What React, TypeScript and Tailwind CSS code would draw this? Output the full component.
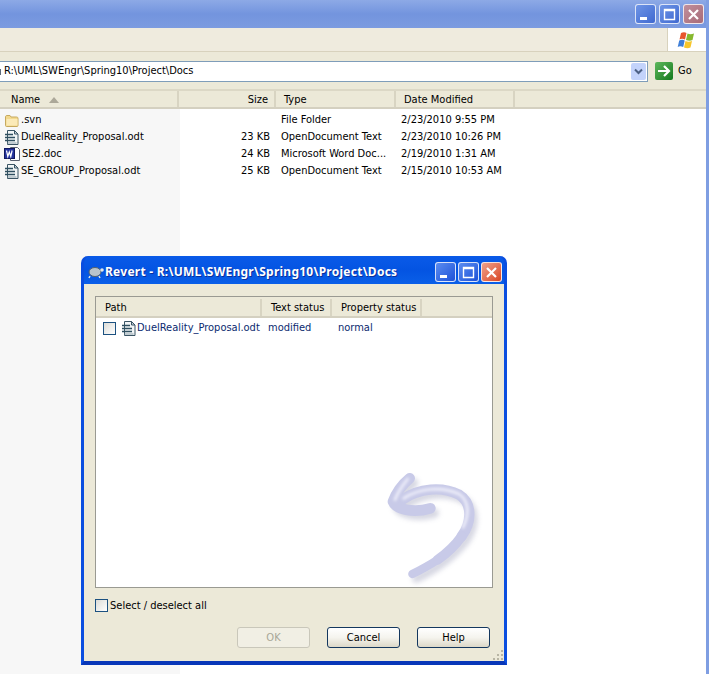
import React from 'react';

const files = [
  { name: '.svn', size: '', type: 'File Folder', date: '2/23/2010 9:55 PM', icon: 'folder' },
  { name: 'DuelReality_Proposal.odt', size: '23 KB', type: 'OpenDocument Text', date: '2/23/2010 10:26 PM', icon: 'odt' },
  { name: 'SE2.doc', size: '24 KB', type: 'Microsoft Word Doc...', date: '2/19/2010 1:31 AM', icon: 'word' },
  { name: 'SE_GROUP_Proposal.odt', size: '25 KB', type: 'OpenDocument Text', date: '2/15/2010 10:53 AM', icon: 'odt' },
];

const OdtIcon = () => (
  <svg width="16" height="17" viewBox="0 0 16 17" className="shrink-0">
    <path d="M3.500 1.500h7l3.500 3.500v10.500h-10.500z" fill="#f2f5f6" stroke="#3a5464" />
    <path d="M10.500 1.500v3.500h3.500z" fill="#c5d3da" stroke="#3a5464" />
    <path d="M1 5.500h8M1 8.500h10M1 11.500h10" stroke="#2f4f60" strokeWidth="1.300" />
    <path d="M3.500 14h9" stroke="#8fa2ac" />
  </svg>
);

const WordIcon = () => (
  <svg width="17" height="17" viewBox="0 0 17 17" className="shrink-0">
    <path d="M6.500 1.500h7l2 2v11h-9z" fill="#fff" stroke="#59606f" />
    <rect x="0.500" y="2.500" width="10" height="10" fill="#23329c" stroke="#10185f" />
    <path d="M2.500 4.500l1.300 6 1.500-4.500 1.500 4.500 1.300-6" fill="none" stroke="#fff" strokeWidth="1.200" />
  </svg>
);

const FolderIcon = () => (
  <svg width="16" height="16" viewBox="0 0 16 16" className="shrink-0">
    <path d="M1.500 4c0-1 .5-1.500 1.500-1.500h3l1 1.500h5.500c1 0 1.500.5 1.500 1.500v7c0 .6-.4 1-1 1H2.500c-.6 0-1-.4-1-1z" fill="#f3d98e" stroke="#c6a95f" />
    <path d="M2.500 6h11v6.500h-11z" fill="#fbeab8" />
  </svg>
);

const XpButton = ({ kind, dim }: { kind: 'min' | 'max' | 'close'; dim?: boolean }) => {
  const bg =
    kind === 'close'
      ? dim
        ? 'bg-gradient-to-br from-[#c08f9c] to-[#a86b78]'
        : 'bg-gradient-to-br from-[#f0a08a] to-[#d8421e]'
      : dim
        ? 'bg-gradient-to-br from-[#6f95e6] to-[#3f68d0]'
        : 'bg-gradient-to-br from-[#5b8cf0] to-[#1d50d8]';
  return (
    <div className={`w-[21px] h-[20px] rounded-[3px] border border-white/80 flex items-center justify-center ${bg}`}>
      <svg width="15" height="15" viewBox="0 0 15 15">
        {kind === 'min' && <rect x="2" y="10" width="7" height="3" fill="#fff" />}
        {kind === 'max' && <path d="M2.500 2.500h10v10h-10zM2.500 3.500h10" fill="none" stroke="#fff" strokeWidth="1.400" />}
        {kind === 'close' && <path d="M3 3l9 9M12 3l-9 9" stroke="#fff" strokeWidth="2.200" />}
      </svg>
    </div>
  );
};

const XpLogo = () => (
  <svg width="20" height="20" viewBox="0 0 20 20">
    <path d="M4 3c2-1 4-1 5.500 0l-1.500 6.500c-2-1-4-1-5.500 0z" fill="#e8552c" />
    <path d="M10.500 3.500c2 1 4 1 6.500 0l-1.500 6.500c-2 1-4 1-6.500 0z" fill="#86b82e" />
    <path d="M2.200 10.500c2-1 4-1 5.500 0l-1.500 6.500c-2-1-4-1-5.500 0z" fill="#3f7fd8" />
    <path d="M8.500 11c2 1 4 1 6.500 0l-1.500 6.500c-2 1-4 1-6.500 0z" fill="#f7c62c" />
  </svg>
);

const HeaderCell = ({ width, className, children }: { width: string; className?: string; children?: React.ReactNode }) => (
  <div className={`h-full flex items-center pt-[2px] border-r-2 border-r-[#d8d4c2] ${width} ${className ?? ''}`}>{children}</div>
);

const DialogButton = ({ label, disabled }: { label: string; disabled?: boolean }) => (
  <div
    className={`w-[73px] h-[21px] pt-[1px] rounded-[3px] border flex items-center justify-center ${
      disabled
        ? 'border-[#c9c7ba] bg-[#f1efe4] text-[#a8a797]'
        : 'border-[#14375e] bg-gradient-to-b from-white via-[#f5f4ee] to-[#dcd8c8] text-black'
    }`}
  >
    {label}
  </div>
);

const UndoMark = () => (
  <svg width="125" height="130" viewBox="0 0 375 390" className="absolute right-[-2px] bottom-[-2px]">
    <defs>
      <filter id="soft" x="-20%" y="-20%" width="140%" height="140%">
        <feGaussianBlur stdDeviation="8" />
      </filter>
      <filter id="soft2" x="-20%" y="-20%" width="140%" height="140%">
        <feGaussianBlur stdDeviation="4" />
      </filter>
    </defs>
    <g transform="translate(12 14)" filter="url(#soft)" opacity="0.4" fill="none" stroke="#9a9cb8" strokeLinecap="round" strokeLinejoin="round">
      <path d="M122 58C100 76 82 100 72 128c8 22 60 36 112 20" strokeWidth="28" />
      <path d="M100 122c50-35 120-40 170-15 40 25 40 80 8 125-40 50-90 85-148 113" strokeWidth="26" />
    </g>
    <g fill="none" stroke="#c8cae8" strokeLinecap="round" strokeLinejoin="round">
      <path d="M122 58C100 76 82 100 72 128c8 22 60 36 112 20" strokeWidth="32" />
      <path d="M100 122c50-35 120-40 170-15 40 25 40 80 8 125" strokeWidth="31" />
      <path d="M278 232c-20 28-46 52-72 70" strokeWidth="29" />
      <path d="M206 302c-24 16-50 30-76 43" strokeWidth="25" />
    </g>
    <g fill="none" stroke="#f1f1fb" strokeLinecap="round" filter="url(#soft2)">
      <path d="M116 60C100 80 86 100 78 122" strokeWidth="8" />
      <path d="M104 118c50-32 116-36 166-13 30 20 32 60 12 100" strokeWidth="8" />
    </g>
  </svg>
);

export default function App() {
  return (
    <div className="relative w-[710px] h-[674px] overflow-hidden bg-white text-[11px] text-black font-['DejaVu_Sans_Condensed','Noto_Sans',sans-serif]">
      <div className="w-[709px] h-full flex flex-col border-r-[3px] border-r-[#7f9ee2]">
        {/* Title bar */}
        <div className="h-[28px] shrink-0 bg-gradient-to-b from-[#8da9e6] via-[#7394de] to-[#7c9be0] flex items-center justify-end gap-[3px] pr-[2px]">
          <XpButton kind="min" dim />
          <XpButton kind="max" dim />
          <XpButton kind="close" dim />
        </div>

        {/* Menu row */}
        <div className="h-[24px] shrink-0 bg-[#efebde] flex justify-end border-b border-b-[#d8d2bd]">
          <div className="w-[39px] bg-white border-l border-l-[#d8d2bd] flex items-center justify-center">
            <XpLogo />
          </div>
        </div>

        {/* Address row */}
        <div className="h-[39px] shrink-0 bg-[#ece9d8] flex items-center pt-[1px] border-b-2 border-b-[#dcd8c6]">
          <div className="w-[648px] h-[21px] bg-white border border-[#7f9db9] border-l-0 flex items-center pr-[1px] justify-between">
            <div className="flex items-center gap-[3px] pt-[1px]">
              <div className="w-[1px] h-[6px] bg-[#5c6a7a]" />
              <span>R:\UML\SWEngr\Spring10\Project\Docs</span>
            </div>
            <div className="w-[15px] h-[17px] rounded-[2px] bg-[#c3d3fb] flex items-center justify-center">
              <svg width="9" height="7" viewBox="0 0 9 7">
                <path d="M1 1.500l3.500 3.500L8 1.500" fill="none" stroke="#4d6185" strokeWidth="2" />
              </svg>
            </div>
          </div>
          <div className="ml-[7px] w-[18px] h-[18px] rounded-[2px] bg-gradient-to-br from-[#5cb85c] to-[#0f7a1c] flex items-center justify-center">
            <svg width="14" height="14" viewBox="0 0 14 14">
              <path d="M1 7h10M7 2l5 5-5 5" fill="none" stroke="#fff" strokeWidth="2.200" />
            </svg>
          </div>
          <span className="ml-[5px] pt-[1px]">Go</span>
        </div>

        {/* Column header */}
        <div className="h-[18px] shrink-0 bg-[#ece9d8] flex items-center border-b-2 border-b-[#d4d0c0]">
          <HeaderCell width="w-[179px]" className="pl-[11px] gap-[9px]">
            Name
            <svg width="10" height="6" viewBox="0 0 10 6">
              <path d="M5 0l5 6H0z" fill="#aca899" />
            </svg>
          </HeaderCell>
          <HeaderCell width="w-[97px]" className="justify-end pr-[6px]">Size</HeaderCell>
          <HeaderCell width="w-[120px]" className="pl-[8px]">Type</HeaderCell>
          <HeaderCell width="w-[119px]" className="pl-[8px]">Date Modified</HeaderCell>
        </div>

        {/* File list */}
        <div className="flex-1 flex min-h-0">
          <div className="w-[180px] bg-[#f7f7f7] pt-[3px]">
            {files.map((f) => (
              <div key={f.name} className="h-[17px] flex items-center pl-[4px] gap-px">
                {f.icon === 'folder' && <FolderIcon />}
                {f.icon === 'odt' && <OdtIcon />}
                {f.icon === 'word' && <WordIcon />}
                <span>{f.name}</span>
              </div>
            ))}
          </div>
          <div className="flex-1 pt-[3px]">
            {files.map((f) => (
              <div key={f.name} className="h-[17px] flex items-center">
                <div className="w-[90px] text-right">{f.size}</div>
                <div className="w-[131px] pl-[11px] whitespace-nowrap">{f.type}</div>
                <div className="whitespace-nowrap">{f.date}</div>
              </div>
            ))}
          </div>
        </div>
      </div>

      {/* Revert dialog */}
      <div className="absolute left-[81px] top-[256px] w-[426px] h-[409px] rounded-t-[7px] bg-[#0a50dc] border-x-[3px] border-b-[4px] border-x-[#0a4ee0] border-b-[#0837b8] flex flex-col">
        <div className="h-[28px] shrink-0 rounded-t-[7px] bg-gradient-to-b from-[#0a5ae8] via-[#0454e2] to-[#0a5fe8] flex items-center pl-[3px] pr-[2px] pt-[4px] gap-[1px] text-white">
          <svg width="17" height="14" viewBox="0 0 17 14" className="shrink-0">
            <ellipse cx="8" cy="7" rx="6" ry="4.500" fill="#b8c4cc" stroke="#52606c" />
            <circle cx="15" cy="5" r="1.800" fill="#dfe6e8" />
            <path d="M3 11l-1 2M12 11l1 2" stroke="#dfe6e8" strokeWidth="1.500" />
          </svg>
          <span className="flex-1 font-['Noto_Sans',sans-serif] font-bold text-[12px] tracking-[0.25px] whitespace-nowrap [text-shadow:1px_1px_#0a2f9c]">
            Revert - R:\UML\SWEngr\Spring10\Project\Docs
          </span>
          <div className="flex gap-[2px]">
            <XpButton kind="min" />
            <XpButton kind="max" />
            <XpButton kind="close" />
          </div>
        </div>

        <div className="flex-1 bg-[#ece9d8] flex flex-col px-[11px] pt-[12px] pb-[13px] relative">
          <div className="relative h-[292px] shrink-0 bg-white border border-[#9a9a92] overflow-hidden">
            <div className="h-[21px] flex items-center bg-[#ece9d8] border-b-2 border-b-[#d4d0c0] pt-[2px]">
              <div className="w-[166px] h-[17px] pt-[2px] flex items-center pl-[9px] border-r-2 border-r-[#d8d4c2]">Path</div>
              <div className="w-[70px] h-[17px] pt-[2px] flex items-center pl-[9px] border-r-2 border-r-[#d8d4c2] whitespace-nowrap">Text status</div>
              <div className="w-[90px] h-[17px] pt-[2px] flex items-center pl-[9px] border-r-2 border-r-[#d8d4c2] whitespace-nowrap">Property status</div>
            </div>
            <div className="h-[17px] flex items-center mt-[2px] text-[#0b2a6f]">
              <div className="ml-[7px] w-[13px] h-[13px] border border-[#1c5180] bg-gradient-to-br from-[#dcdcd7] to-white" />
              <div className="ml-[5px] flex items-center w-[147px]">
                <OdtIcon />
                <span className="whitespace-nowrap">DuelReality_Proposal.odt</span>
              </div>
              <div className="w-[70px]">modified</div>
              <div>normal</div>
            </div>
            <UndoMark />
          </div>

          <div className="mt-[11px] h-[13px] flex items-center gap-[2px]">
            <div className="w-[13px] h-[13px] border border-[#1c5180] bg-gradient-to-br from-[#dcdcd7] to-white" />
            <span className="pt-[2px]">Select / deselect all</span>
          </div>

          <div className="mt-[15px] flex justify-end pr-[3px]">
            <DialogButton label="OK" disabled />
            <div className="ml-[17px]">
              <DialogButton label="Cancel" />
            </div>
            <div className="ml-[17px]">
              <DialogButton label="Help" />
            </div>
          </div>

          {/* resize grip */}
          <svg width="12" height="12" viewBox="0 0 12 12" className="absolute right-0 bottom-0">
            <path d="M9 1h2v2H9zM5 5h2v2H5zM9 5h2v2H9zM1 9h2v2H1zM5 9h2v2H5zM9 9h2v2H9z" fill="#b8b5a4" />
          </svg>
        </div>
      </div>
    </div>
  );
}
